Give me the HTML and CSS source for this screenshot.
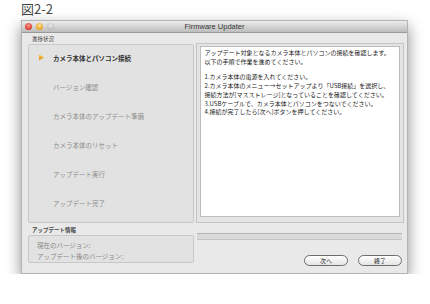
FILE: index.html
```html
<!DOCTYPE html>
<html lang="ja">
<head>
  <meta charset="UTF-8">
  <title>Firmware Updater</title>
  <link rel="stylesheet" href="styles.css">
</head>
<body>
  <div class="fig-title">図2-2</div>

  <div class="window">
    <div class="titlebar">
      <div class="lights">
        <span class="light red"></span>
        <span class="light orange"></span>
        <span class="light gray"></span>
      </div>
      <div class="title">Firmware Updater</div>
    </div>

    <div class="content">
      <div class="left-col">
        <div class="group-label">進捗状況</div>
        <ul class="steps">
          <li class="step active"><span class="arrow"></span><span>カメラ本体とパソコン接続</span></li>
          <li class="step"><span class="arrow"></span><span>バージョン確認</span></li>
          <li class="step"><span class="arrow"></span><span>カメラ本体のアップデート準備</span></li>
          <li class="step"><span class="arrow"></span><span>カメラ本体のリセット</span></li>
          <li class="step"><span class="arrow"></span><span>アップデート実行</span></li>
          <li class="step"><span class="arrow"></span><span>アップデート完了</span></li>
        </ul>
        <div class="group-label bold">アップデート情報</div>
        <div class="info">
          <div>現在のバージョン:</div>
          <div>アップデート後のバージョン:</div>
        </div>
      </div>

      <div class="right-col">
        <div class="text-frame">
          <div class="text-box">
            <p>アップデート対象となるカメラ本体とパソコンの接続を確認します。<br>以下の手順で作業を進めてください。</p>
            <p>1.カメラ本体の電源を入れてください。<br>2.カメラ本体のメニュー→セットアップより「USB接続」を選択し、<br>接続方法が[マスストレージ]となっていることを確認してください。<br>3.USBケーブルで、カメラ本体とパソコンをつないでください。<br>4.接続が完了したら[次へ]ボタンを押してください。</p>
          </div>
        </div>
        <div class="progress"></div>
        <div class="buttons">
          <button class="btn">次へ</button>
          <button class="btn">終了</button>
        </div>
      </div>
    </div>
  </div>
</body>
</html>
```

FILE: styles.css
```css
* {
  box-sizing: border-box;
}

body {
  margin: 0;
  background: #fff;
  font-family: "Liberation Sans", "Noto Sans CJK JP", sans-serif;
  color: #333;
}

.fig-title {
  padding-left: 21px;
  height: 20px;
  font-family: "Noto Sans CJK JP", sans-serif;
  font-size: 13px;
  line-height: 18px;
  color: #444;
}

.window {
  margin-left: 21px;
  width: 387px;
  height: 254px;
  background: #e9e9e9;
  border: 1px solid #b4b4b4;
  box-shadow: 0 6px 14px rgba(0, 0, 0, 0.45);
  display: flex;
  flex-direction: column;
}

.titlebar {
  height: 12px;
  flex: none;
  background: linear-gradient(#ececec, #bdbdbd);
  border-bottom: 1px solid #9a9a9a;
  display: flex;
  align-items: center;
  position: relative;
}

.lights {
  display: flex;
  gap: 4px;
  padding-left: 3px;
}

.light {
  width: 7px;
  height: 7px;
  border-radius: 50%;
}

.red { background: radial-gradient(circle at 50% 35%, #f79a8e, #d9362c 70%); }
.orange { background: radial-gradient(circle at 50% 35%, #fde39a, #e8a21c 70%); }
.gray { background: radial-gradient(circle at 50% 35%, #eee, #bbb 70%); }

.title {
  position: absolute;
  left: 0;
  right: 0;
  text-align: center;
  font-size: 7.5px;
  color: #333;
}

.content {
  display: flex;
  gap: 2px;
  padding: 0 3px 0 6px;
}

.left-col {
  width: 166px;
  display: flex;
  flex-direction: column;
}

.group-label {
  font-family: "Noto Sans CJK JP", sans-serif;
  font-size: 5.5px;
  line-height: 9px;
  margin-top: 2px;
  padding-left: 4px;
  color: #444;
}

.group-label.bold {
  font-weight: bold;
  margin-top: 2px;
  line-height: 10px;
}

.steps {
  list-style: none;
  margin: 0;
  padding: 3px 0 0 10px;
  height: 179px;
  background: #e2e2e2;
  border: 1px solid #c8c8c8;
  border-radius: 2px;
  display: flex;
  flex-direction: column;
  gap: 10.2px;
}

.step {
  display: flex;
  align-items: center;
  gap: 9px;
  height: 19px;
  font-family: "Noto Sans CJK JP", sans-serif;
  font-size: 6.5px;
  color: #8c8c8c;
}

.arrow {
  width: 5px;
  height: 6px;
}

.step.active {
  color: #333;
  font-weight: bold;
}

.step.active .arrow {
  background: linear-gradient(#f8c040, #e88a10);
  clip-path: polygon(0 0, 100% 50%, 0 100%);
}

.info {
  height: 28px;
  background: #e2e2e2;
  border: 1px solid #c8c8c8;
  border-radius: 2px;
  padding: 4px 0 0 8px;
  font-family: "Noto Sans CJK JP", sans-serif;
  font-size: 6.5px;
  line-height: 11px;
  color: #888;
}

.right-col {
  width: 209px;
  display: flex;
  flex-direction: column;
}

.text-frame {
  margin-top: 10px;
  height: 180px;
  background: #e4e4e4;
  border: 1px solid #c4c4c4;
  padding: 2px 3px 5px 3px;
}

.text-box {
  height: 100%;
  background: #fff;
  border: 1px solid #bcbcbc;
  padding: 2px 4px;
  font-family: "Noto Sans CJK JP", sans-serif;
  font-size: 6px;
  line-height: 8.7px;
  color: #222;
}

.text-box p {
  margin: 0 0 7px;
}

.progress {
  margin: 10px 2px 0 1px;
  height: 7px;
  background: #dadada;
  border-top: 1px solid #b4b4b4;
  border-bottom: 1px solid #c4c4c4;
}

.buttons {
  display: flex;
  justify-content: flex-end;
  gap: 10px;
  margin: 15px 2px 0 0;
}

.btn {
  width: 44px;
  height: 11px;
  padding: 0;
  border: 1px solid #6c6c6c;
  border-radius: 6px;
  background: linear-gradient(#ffffff, #e4e4e4);
  font-family: "Noto Sans CJK JP", sans-serif;
  font-size: 6px;
  line-height: 9px;
  color: #222;
}
```
